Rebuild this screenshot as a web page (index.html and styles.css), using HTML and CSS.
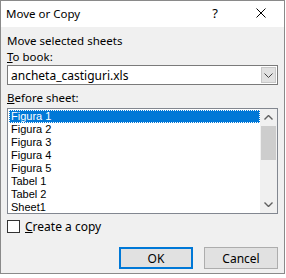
FILE: index.html
```html
<!DOCTYPE html>
<html lang="en">
<head>
    <meta charset="UTF-8">
    <title>Move or Copy</title>
    <link rel="stylesheet" href="styles.css">
</head>
<body>
    <div class="dialog">
        <div class="title-bar">
            <span class="title">Move or Copy</span>
            <div class="caption-buttons">
                <span class="caption-btn">?</span>
                <span class="caption-btn">
                    <svg width="10" height="10" viewBox="0 0 10 10"><path d="M0.5 0.5 L9.5 9.5 M9.5 0.5 L0.5 9.5" stroke="#000" stroke-width="1" fill="none"/></svg>
                </span>
            </div>
        </div>

        <div class="dialog-body">
            <p class="label">Move selected sheets</p>
            <p class="label"><u>T</u>o book:</p>
            <div class="combo">
                <span class="combo-text">ancheta_castiguri.xls</span>
                <span class="combo-btn">
                    <svg width="9" height="5" viewBox="0 0 9 5"><path d="M0.5 0.5 L4.5 4.5 L8.5 0.5" stroke="#444" stroke-width="1" fill="none"/></svg>
                </span>
            </div>

            <p class="label label-gap"><u>B</u>efore sheet:</p>
            <div class="listbox">
                <ul class="items">
                    <li class="selected">Figura 1</li>
                    <li>Figura 2</li>
                    <li>Figura 3</li>
                    <li>Figura 4</li>
                    <li>Figura 5</li>
                    <li>Tabel 1</li>
                    <li>Tabel 2</li>
                    <li>Sheet1</li>
                </ul>
                <div class="scrollbar">
                    <span class="arrow">
                        <svg width="9" height="5" viewBox="0 0 9 5"><path d="M0.5 4.5 L4.5 0.5 L8.5 4.5" stroke="#606060" stroke-width="1.4" fill="none"/></svg>
                    </span>
                    <div class="track"><div class="thumb"></div></div>
                    <span class="arrow">
                        <svg width="9" height="5" viewBox="0 0 9 5"><path d="M0.5 0.5 L4.5 4.5 L8.5 0.5" stroke="#606060" stroke-width="1.4" fill="none"/></svg>
                    </span>
                </div>
            </div>

            <label class="check-row">
                <span class="checkbox"></span>
                <span><u>C</u>reate a copy</span>
            </label>

            <div class="buttons">
                <button class="btn btn-default">OK</button>
                <button class="btn">Cancel</button>
            </div>
        </div>
    </div>
</body>
</html>
```

FILE: styles.css
```css
body {
    margin: 0;
    padding: 0;
    background-color: #fff;
    font-family: "Noto Sans", "Open Sans", sans-serif;
    font-size: 12px;
    color: #000;
}

.dialog {
    width: 283px;
    height: 272px;
    border: 1px solid #8a8a8a;
    background-color: #f0f0f0;
    display: flex;
    flex-direction: column;
}

/* Title bar */
.title-bar {
    height: 26px;
    background-color: #fff;
    display: flex;
    align-items: center;
    justify-content: space-between;
}

.title {
    padding-left: 5px;
    margin-top: -2px;
    font-size: 11.5px;
}

.caption-buttons {
    display: flex;
    height: 100%;
}

.caption-btn {
    width: 46px;
    display: flex;
    align-items: center;
    justify-content: center;
    font-size: 13px;
    margin-top: -2px;
}

/* Body */
.dialog-body {
    padding: 0 6px;
    display: flex;
    flex-direction: column;
}

.label {
    margin: 0;
    line-height: 16px;
    font-size: 11.5px;
}

.dialog-body > .label:first-child {
    margin-top: 6px;
}

.label-gap {
    margin-top: 5px;
}

.combo {
    height: 18px;
    background-color: #fff;
    border: 1px solid #7a7a7a;
    display: flex;
    align-items: center;
    justify-content: space-between;
}

.combo-text {
    padding-left: 3px;
}

.combo-btn {
    width: 15px;
    height: 16px;
    margin-right: 1px;
    background-color: #e1e1e1;
    border: 1px solid #c8c8c8;
    box-sizing: border-box;
    display: flex;
    align-items: center;
    justify-content: center;
}

.listbox {
    margin-top: 2px;
    height: 104px;
    background-color: #fff;
    border: 1px solid #828790;
    display: flex;
}

.items {
    list-style: none;
    margin: 0;
    padding: 0 0 0 1px;
    flex: 1;
}

.items li {
    height: 13px;
    line-height: 13px;
    padding-left: 2px;
    font-family: "Liberation Sans", Arial, sans-serif;
    font-size: 11px;
    box-sizing: border-box;
}

.items li.selected {
    background-color: #0078d7;
    color: #fff;
    outline: 1px dotted #fff;
    outline-offset: -1px;
    margin-top: 1px;
}

.scrollbar {
    width: 17px;
    display: flex;
    flex-direction: column;
    background-color: #f0f0f0;
}

.arrow {
    height: 17px;
    display: flex;
    align-items: center;
    justify-content: center;
}

.track {
    flex: 1;
}

.thumb {
    margin: 0 1px;
    height: 34px;
    background-color: #cdcdcd;
}

.check-row {
    margin-top: 6px;
    display: flex;
    align-items: center;
    gap: 5px;
    height: 13px;
}

.checkbox {
    width: 11px;
    height: 11px;
    border: 1px solid #333;
    background-color: #fff;
}

.buttons {
    margin-top: 14px;
    display: flex;
    justify-content: flex-end;
    gap: 11px;
}

.btn {
    width: 74px;
    height: 22px;
    background-color: #e1e1e1;
    border: 1px solid #adadad;
    font-family: inherit;
    font-size: 12px;
    padding: 0;
}

.btn-default {
    border: 2px solid #0078d7;
}
```
